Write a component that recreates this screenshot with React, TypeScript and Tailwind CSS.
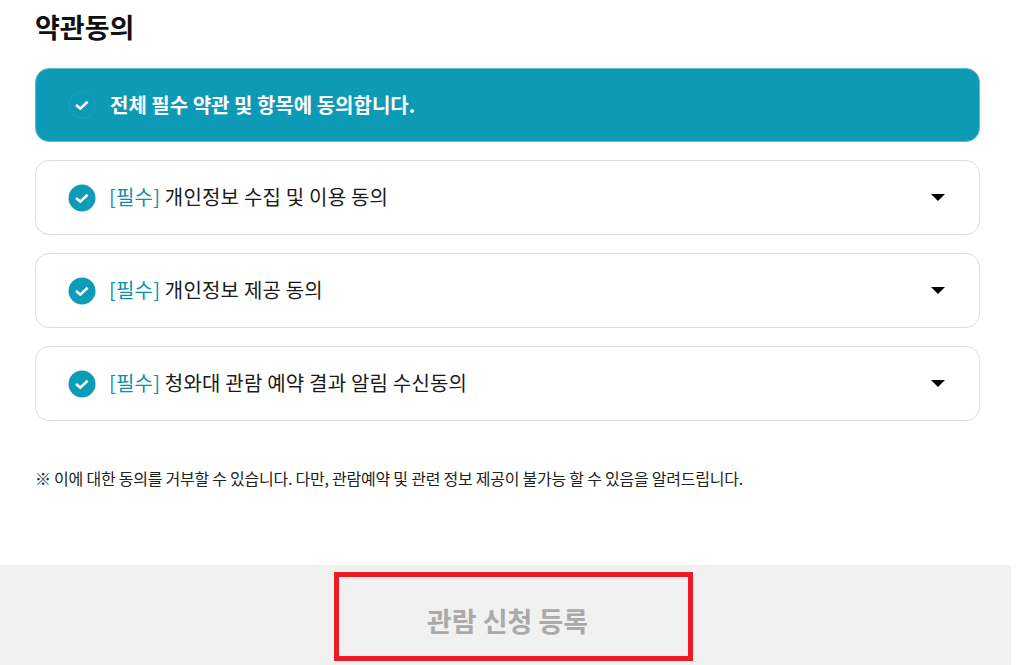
const font = "font-['Noto_Sans_CJK_KR','Noto_Sans',sans-serif]";

function Check({ hero }: { hero?: boolean }) {
  return (
    <svg width="28" height="28" viewBox="0 0 28 28" className="shrink-0">
      {hero ? (
        <circle cx="14" cy="14" r="13" fill="#0d9ab6" stroke="#2aa6bf" strokeWidth="1" strokeDasharray="2 1" />
      ) : (
        <circle cx="14" cy="14" r="13.5" fill="#0d9cb8" />
      )}
      <path d="M8 14 L12.3 17.6 L19.6 10.8" fill="none" stroke="#fff" strokeWidth="2.6" />
    </svg>
  );
}

function Row({ text }: { text: string }) {
  return (
    <div className="flex h-[75px] items-center rounded-[14px] border border-[#dcdcdc] bg-white pl-[32px] pr-[34px]">
      <Check />
      <span className="ml-[13px] pb-[2px] text-[20px] tracking-[0.2px] text-[#1a1a1a]">
        <span className="text-[#0d8fa9]">[필수]</span> {text}
      </span>
      <svg width="14" height="7" viewBox="0 0 14 7" className="ml-auto">
        <path d="M0 0 H14 L7 7 Z" fill="#000" />
      </svg>
    </div>
  );
}

export default function App() {
  return (
    <div className={`${font} flex h-[665px] w-[1023px] flex-col overflow-hidden bg-white`}>
      <div className="flex flex-1 flex-col pl-[35px] pr-[43px]">
        <h2 className="mt-[8px] h-[37px] text-[27px] font-bold leading-[37px] text-[#111]">약관동의</h2>
        <div className="mt-[23px] flex h-[74px] items-center rounded-[14px] border border-[#6db9cc] bg-[#0d9ab6] pl-[32px]">
          <Check hero />
          <span className="ml-[14px] text-[20px] font-bold text-white">전체 필수 약관 및 항목에 동의합니다.</span>
        </div>
        <div className="mt-[18px] flex flex-col gap-[18px]">
          <Row text="개인정보 수집 및 이용 동의" />
          <Row text="개인정보 제공 동의" />
          <Row text="청와대 관람 예약 결과 알림 수신동의" />
        </div>
        <p className="mt-[45px] text-[16px] tracking-[-0.24px] text-[#222]">※ 이에 대한 동의를 거부할 수 있습니다. 다만, 관람예약 및 관련 정보 제공이 불가능 할 수 있음을 알려드립니다.</p>
      </div>
      <div className="flex h-[100px] w-[1011px] justify-center bg-[#f1f1f1] pl-[16px] pt-[7px]">
        <div className="flex h-[89px] w-[359px] items-center justify-center border-[5px] border-[#ed1c24] pr-[12px] pt-[9px]">
          <span className="text-[27px] font-bold text-[#aaaaaa]">관람 신청 등록</span>
        </div>
      </div>
    </div>
  );
}
